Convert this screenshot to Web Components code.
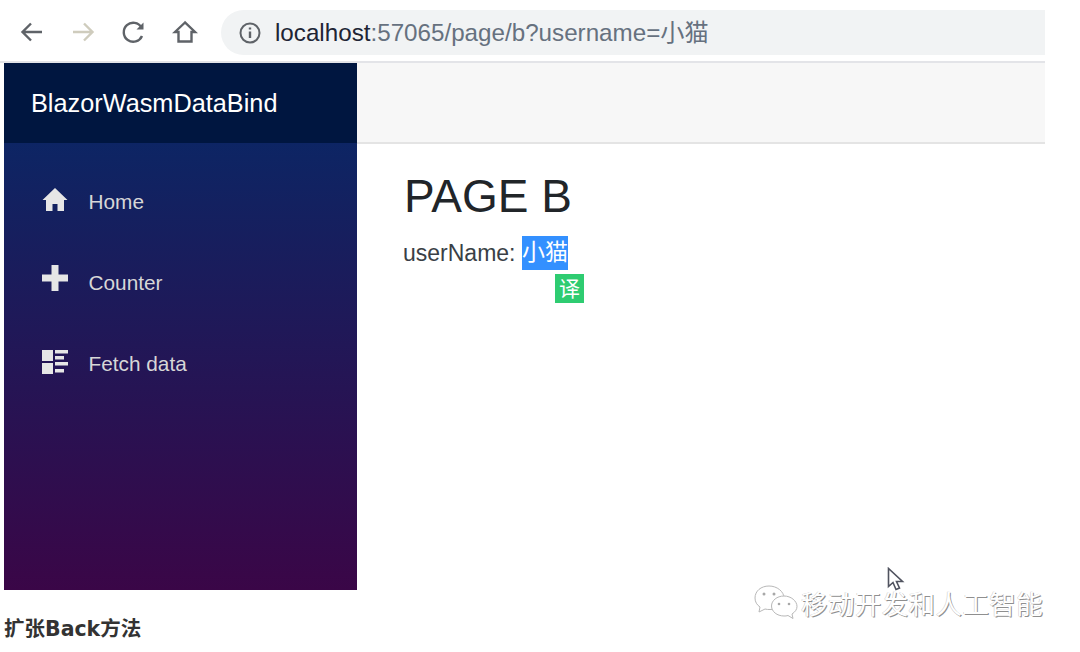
<!DOCTYPE html>
<html lang="zh">
<head>
<meta charset="utf-8">
<title>PAGE B</title>
<style>
  html, body { margin: 0; padding: 0; background: #fff; }
  body { width: 1080px; height: 652px; overflow: hidden; position: relative; font-family: "Liberation Sans", "Noto Sans CJK SC", sans-serif; }
</style>
</head>
<body>
<browser-toolbar url-host="localhost" url-rest=":57065/page/b?username=小猫"></browser-toolbar>
<app-shell>
  <nav-menu slot="nav" brand="BlazorWasmDataBind">
    <nav-item icon="home">Home</nav-item>
    <nav-item icon="plus">Counter</nav-item>
    <nav-item icon="list">Fetch data</nav-item>
  </nav-menu>
  <page-b user-name="小猫"></page-b>
</app-shell>
<article-caption>扩张Back方法</article-caption>
<wechat-mark>移动开发和人工智能</wechat-mark>
<mouse-cursor></mouse-cursor>

<script>
// Browser toolbar with the address pill.
const toolbarTemplate = document.createElement('template')
toolbarTemplate.innerHTML = `
  <style>
    :host { display: block; width: 1045px; height: 63px; box-sizing: border-box; border-bottom: 2px solid #e3e4e8; }
    .bar { display: flex; align-items: center; height: 61px; padding-left: 19px; box-sizing: border-box; }
    .buttons { display: flex; gap: 25px; align-items: center; margin-top: 2px; }
    svg { display: block; width: 26px; height: 26px; fill: none; stroke: #5f6368; stroke-width: 2.4; }
    .pill { display: flex; align-items: center; margin-left: 23px; flex: 1; height: 45px; margin-top: 4px; padding-left: 17px; background: #f1f3f4; border-radius: 23px 0 0 23px; }
    .pill svg { width: 24px; height: 24px; margin-right: 13px; stroke-width: 2; }
    .url { font: 24.2px "Liberation Sans", "Noto Sans CJK SC", sans-serif; color: #66717f; white-space: nowrap; margin-top: -5px; }
    .url b { font-weight: normal; color: #202434; }
  </style>
  <div class="bar">
    <div class="buttons">
      <svg viewBox="0 0 26 26"><path d="M23 13H4M12 4.500 3.500 13l8.500 8.500"/></svg>
      <svg viewBox="0 0 26 26" style="stroke:#cfccbd"><path d="M3 13h19M14 4.500l8.500 8.500-8.500 8.500"/></svg>
      <svg viewBox="0 0 26 26"><path d="M21 17a9.500 9.500 0 1 1-.5-8.500"/><path d="M22.500 3.500v7h-7z" fill="#5f6368" stroke="none"/></svg>
      <svg viewBox="0 0 26 26"><path d="M13 3.500 3 13h3.500v9.500h13V13H23z"/></svg>
    </div>
    <div class="pill">
      <svg viewBox="0 0 24 24"><circle cx="12" cy="12" r="9.500"/><path d="M12 10.500V17M12 6.500v2" stroke-width="2.400"/></svg>
      <span class="url"></span>
    </div>
  </div>
`
customElements.define('browser-toolbar',
  /**
   * Represents the browser chrome above the page.
   */
  class extends HTMLElement {
    constructor() {
      super()
      this.attachShadow({ mode: 'open' })
        .appendChild(toolbarTemplate.content.cloneNode(true))
      const url = this.shadowRoot.querySelector('.url')
      const host = document.createElement('b')
      host.textContent = this.getAttribute('url-host')
      url.append(host, this.getAttribute('url-rest'))
    }
  }
)

// Sidebar plus content column.
const shellTemplate = document.createElement('template')
shellTemplate.innerHTML = `
  <style>
    :host { display: flex; width: 1041px; height: 527px; margin-left: 4px; }
    .side { width: 353px; flex: none; }
    .main { flex: 1; display: flex; flex-direction: column; }
    .top { height: 81px; flex: none; box-sizing: border-box; background: #f7f7f7; border-bottom: 2px solid #e4e4e4; }
  </style>
  <div class="side"><slot name="nav"></slot></div>
  <div class="main">
    <div class="top"></div>
    <slot></slot>
  </div>
`
customElements.define('app-shell',
  /**
   * Represents the Blazor page layout.
   */
  class extends HTMLElement {
    constructor() {
      super()
      this.attachShadow({ mode: 'open' })
        .appendChild(shellTemplate.content.cloneNode(true))
    }
  }
)

// Sidebar menu.
const menuTemplate = document.createElement('template')
menuTemplate.innerHTML = `
  <style>
    :host { display: flex; flex-direction: column; height: 527px; }
    .brand { height: 80px; flex: none; display: flex; align-items: center; padding-left: 27px; background: #001640; color: #fff; font: 25.3px "Liberation Sans", sans-serif; }
    .items { flex: 1; display: flex; flex-direction: column; gap: 41px; padding-top: 39px; background: linear-gradient(180deg, #0d2564 0%, #3a0647 100%); }
  </style>
  <div class="brand"></div>
  <div class="items"><slot></slot></div>
`
customElements.define('nav-menu',
  /**
   * Represents the sidebar with its brand row.
   */
  class extends HTMLElement {
    constructor() {
      super()
      this.attachShadow({ mode: 'open' })
        .appendChild(menuTemplate.content.cloneNode(true))
      this.shadowRoot.querySelector('.brand').textContent = this.getAttribute('brand')
    }
  }
)

const navIcons = {
  home: '<path d="M13 1 0.500 13H4v11h6.500v-7h5v7H22V13h3.500z"/>',
  plus: '<path d="M9.500 -3h7v9.500H26v7h-9.500V23h-7v-9.500H0v-7h9.500z"/>',
  list: '<path d="M0 1h11v11H0zM0 14h11v11H0zM13 1h13v3.500H13zM13 7h9v3.500h-9zM13 13h13v3.500H13zM13 20h9v3.500h-9z"/>'
}

const itemTemplate = document.createElement('template')
itemTemplate.innerHTML = `
  <style>
    :host { display: flex; align-items: center; height: 40px; padding-left: 38px; color: #d7d7d7; font: 20.8px "Liberation Sans", sans-serif; }
    svg { width: 26px; height: 26px; fill: #e6e6e6; flex: none; margin-right: 20.500px; margin-top: -5px; overflow: visible; }
  </style>
  <svg viewBox="0 0 26 26"></svg>
  <slot></slot>
`
customElements.define('nav-item',
  /**
   * Represents one sidebar link.
   */
  class extends HTMLElement {
    constructor() {
      super()
      this.attachShadow({ mode: 'open' })
        .appendChild(itemTemplate.content.cloneNode(true))
      this.shadowRoot.querySelector('svg').innerHTML = navIcons[this.getAttribute('icon')]
    }
  }
)

// The routed page.
const pageTemplate = document.createElement('template')
pageTemplate.innerHTML = `
  <style>
    :host { display: block; padding: 25px 0 0 47px; color: #212529; font-family: "Liberation Sans", "Noto Sans CJK SC", sans-serif; }
    h1 { margin: 0; font-size: 46px; font-weight: normal; line-height: 54px; }
    .line { position: relative; display: flex; align-items: center; height: 34px; margin: 13px 0 0 -1px; font-size: 23px; color: #3a3f46; white-space: pre; }
    .sel { background: #3390ff; color: #fff; height: 34px; line-height: 33px; }
    .translate { position: absolute; left: 152px; top: 38px; width: 29px; height: 29px; background: #2ecc71; color: #fff; font-size: 21px; line-height: 30px; text-align: center; }
  </style>
  <h1>PAGE B</h1>
  <div class="line">userName: <span class="sel"></span><span class="translate">译</span></div>
`
customElements.define('page-b',
  /**
   * Represents the page that shows the user name from the query string.
   */
  class extends HTMLElement {
    constructor() {
      super()
      this.attachShadow({ mode: 'open' })
        .appendChild(pageTemplate.content.cloneNode(true))
      this.shadowRoot.querySelector('.sel').textContent = this.getAttribute('user-name')
    }
  }
)

// Article text below the screenshot.
const captionTemplate = document.createElement('template')
captionTemplate.innerHTML = `
  <style>
    :host { display: block; padding: 24px 0 0 4px; color: #333; font: bold 20.500px/30px "DejaVu Sans", "Noto Sans CJK SC", sans-serif; }
  </style>
  <slot></slot>
`
customElements.define('article-caption',
  /**
   * Represents the heading that follows the picture.
   */
  class extends HTMLElement {
    constructor() {
      super()
      this.attachShadow({ mode: 'open' })
        .appendChild(captionTemplate.content.cloneNode(true))
    }
  }
)

// Watermark laid over the picture.
const markTemplate = document.createElement('template')
markTemplate.innerHTML = `
  <style>
    :host { position: absolute; left: 754px; top: 585px; display: flex; align-items: center; gap: 3px; color: #fff; font: 26.500px/36px "Noto Sans CJK SC", sans-serif; letter-spacing: 0.400px; text-shadow: 1px 1px 0 #8f8f8f, -0.500px -0.500px 0 #c9c9c9; }
    svg { width: 44px; height: 36px; fill: #fff; stroke: #b8b8b8; stroke-width: 1; flex: none; }
    circle.eye { fill: #a8a8a8; stroke: none; }
  </style>
  <svg viewBox="0 0 44 36">
    <path d="M15 1C7 1 1 6 1 13c0 4 2 7 5 9l-1 5 6-3c2 .5 3 .5 5 .5 8 0 14-5 14-11.500S23 1 15 1z"/>
    <path d="M30 11c-7 0-12.500 4.500-12.500 10S23 31 30 31c1.500 0 2.500 0 4-.5l5 3-1-4.500c3-2 5-4.500 5-7.500 0-5.500-6-10.500-13-10.500z"/>
    <circle class="eye" cx="10" cy="9" r="1.500"/><circle class="eye" cx="20" cy="9" r="1.500"/>
    <circle class="eye" cx="25" cy="19" r="1.300"/><circle class="eye" cx="35" cy="19" r="1.300"/>
  </svg>
  <slot></slot>
`
customElements.define('wechat-mark',
  /**
   * Represents the WeChat account watermark.
   */
  class extends HTMLElement {
    constructor() {
      super()
      this.attachShadow({ mode: 'open' })
        .appendChild(markTemplate.content.cloneNode(true))
    }
  }
)

// Mouse pointer caught in the picture.
const cursorTemplate = document.createElement('template')
cursorTemplate.innerHTML = `
  <style>
    :host { position: absolute; left: 887px; top: 567px; width: 18px; height: 26px; }
    svg { display: block; width: 18px; height: 26px; fill: #fff; stroke: #50535f; stroke-width: 1.600; }
  </style>
  <svg viewBox="0 0 18 26"><path d="M1.500 1.500v18l4.500-4 3 7 3.500-1.500-3-6.500h6z"/></svg>
`
customElements.define('mouse-cursor',
  /**
   * Represents the arrow pointer.
   */
  class extends HTMLElement {
    constructor() {
      super()
      this.attachShadow({ mode: 'open' })
        .appendChild(cursorTemplate.content.cloneNode(true))
    }
  }
)
</script>
</body>
</html>
